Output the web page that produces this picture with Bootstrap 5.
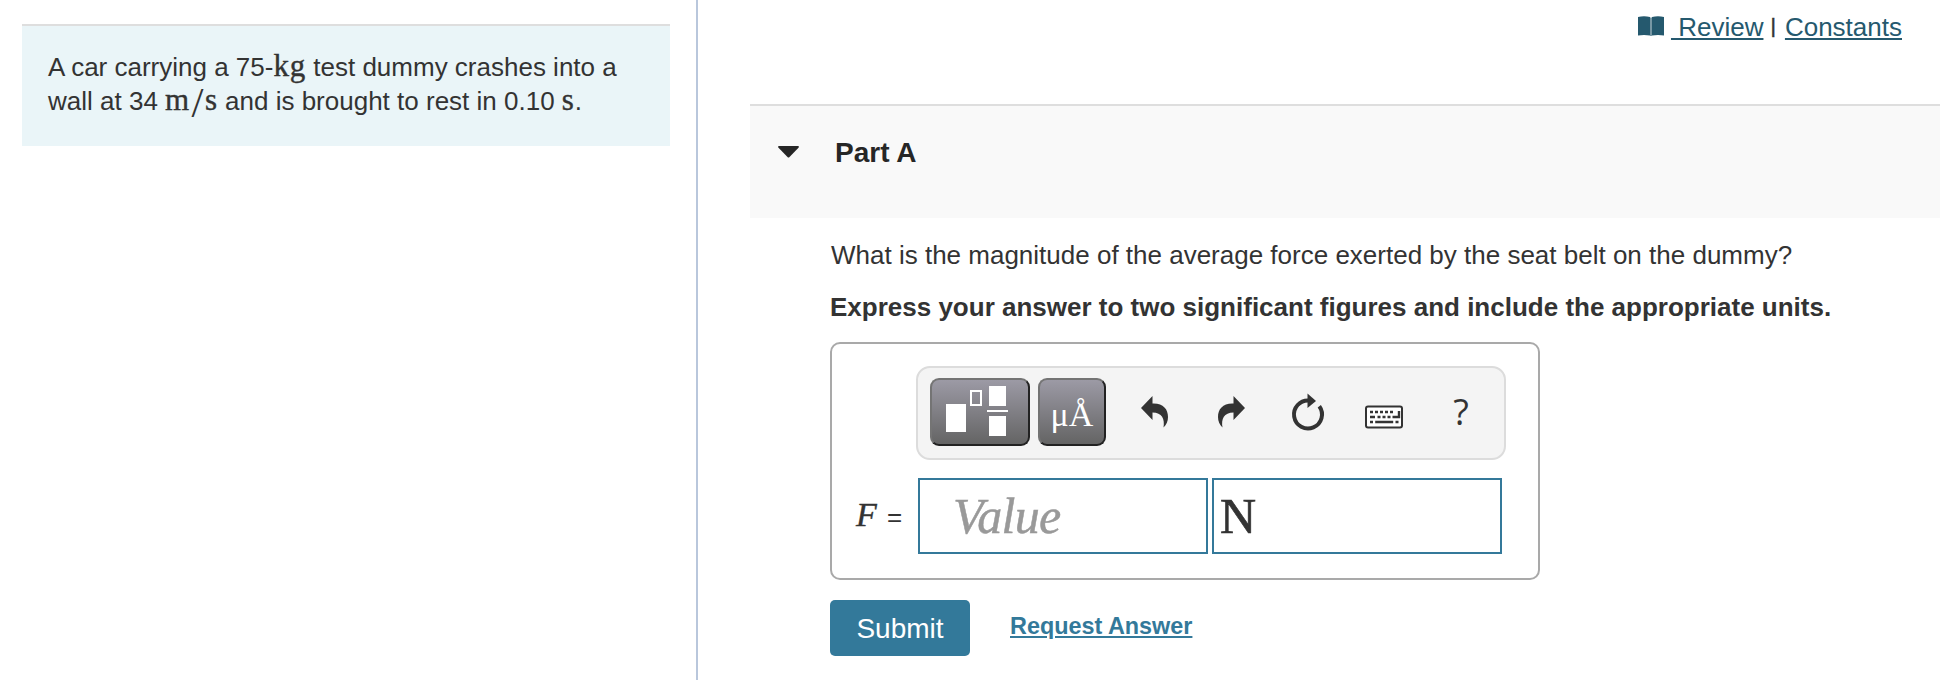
<!DOCTYPE html>
<html lang="en">
<head>
<meta charset="utf-8">
<meta name="viewport" content="width=device-width, initial-scale=1">
<title>Part A</title>
<link href="https://cdn.jsdelivr.net/npm/bootstrap@5.3.0/dist/css/bootstrap.min.css" rel="stylesheet">
<style>
  body { font-family: "Liberation Sans", Arial, sans-serif; font-size: 26px; line-height: 34px; color: #333; background: #fff; height: 680px; overflow: hidden; }
  .problem-pane { width: 698px; height: 680px; border-right: 2px solid #b9c7dc; padding: 24px 26px 0 22px; }
  .problem-text { height: 122px; background: #eaf5f8; border-top: 2px solid #dedede; padding: 24px 0 0 26px; white-space: nowrap; }
  .problem-text div { height: 34px; }
  .tex { font-family: "Liberation Serif", serif; line-height: 1px; -webkit-text-stroke: .4px #333; }
  .tex-unit { font-size: 31px; letter-spacing: .8px; }
  .tex-slash { font-family: "Liberation Serif", serif; font-size: 43px; line-height: 1px; position: relative; top: 7px; margin: 0 1.5px; }
  .work-pane { padding-left: 52px; padding-right: 16px; }
  .top-links { height: 104px; padding: 10px 38px 0 0; }
  .top-links a { color: #25596e; text-decoration-thickness: 2px; text-underline-offset: 2px; white-space: pre; }
  .link-divider { font-size: 21px; line-height: 32px; margin: 0 9px 0 7px; -webkit-text-stroke: .5px #333; }
  .book { margin: 6px 7px 0 0; }
  .part-head { height: 114px; background: #f9f9f9; border-top: 2px solid #dedede; padding: 30px 0 0 28px; font-size: 28px; font-weight: bold; color: #262626; }
  .part-head svg { margin: 10px 36px 0 0; }
  .part-body { padding-left: 80px; }
  .question { margin-top: 20px; padding-left: 1px; height: 34px; white-space: nowrap; }
  .instruction { margin-top: 18px; height: 34px; white-space: nowrap; font-weight: bold; }
  .answer-box { margin-top: 18px; width: 710px; height: 238px; border: 2px solid #a9a9a9; border-radius: 10px; padding-top: 22px; }
  .math-tools { margin-left: 84px; width: 590px; height: 94px; border: 2px solid #dcdcdc; border-radius: 14px; background: #f4f4f4; padding: 10px 12px; }
  .tool-key { height: 68px; border: 2px solid; border-color: #747474 #222 #222 #747474; border-radius: 9px; background: linear-gradient(#9c9aa5, #646464); color: #fff; padding: 0; }
  .units-key { width: 68px; margin-left: 8px; font-family: "Liberation Serif", serif; font-size: 34px; line-height: 58px; padding-top: 6px; }
  .tool-icons { margin-left: 20px; }
  .help-mark { font-family: "Open Sans", sans-serif; font-size: 36px; line-height: 67px; width: 40px; text-align: center; margin-right: 11px; }
  .entry { margin-top: 18px; height: 76px; }
  .entry-label { width: 86px; padding-left: 24px; line-height: 78px; white-space: nowrap; }
  .entry-symbol { font-size: 34px; margin-right: 3px; }
  .entry-field { width: 290px; height: 76px; border: 2px solid #34799a; font-family: "Liberation Serif", serif; font-size: 50px; line-height: 72px; }
  .entry-value { padding-left: 33px; font-style: italic; color: #999; letter-spacing: -.7px; -webkit-text-stroke: .5px #999; }
  .entry-unit { padding-left: 6px; margin-left: 4px; -webkit-text-stroke: .7px #333; }
  .submit-row { margin-top: 20px; }
  .btn-submit { width: 140px; height: 56px; background: #33799a; color: #fff; border: 0; border-radius: 5px; font-size: 28px; line-height: 57px; padding: 0; }
  .request { color: #33799a; font-weight: bold; font-size: 23.4px; margin-left: 40px; line-height: 52px; text-decoration-thickness: 2px; text-underline-offset: 2px; }
</style>
</head>
<body>
<div class="d-flex">
  <aside class="problem-pane flex-shrink-0">
    <div class="problem-text">
      <div>A car carrying a 75-<span class="tex tex-unit">kg</span> test dummy crashes into a</div>
      <div>wall at 34 <span class="tex tex-unit">m</span><span class="tex-slash">/</span><span class="tex tex-unit">s</span> and is brought to rest in 0.10 <span class="tex tex-unit">s</span>.</div>
    </div>
  </aside>
  <main class="work-pane flex-grow-1">
    <div class="top-links d-flex justify-content-end align-items-start">
      <svg class="book" width="26" height="20" viewBox="0 0 26 20"><path fill="#25596e" d="M0 1Q6-.5 12 1V19.500Q6 18.500 0 19.500ZM14 1Q20-.5 26 1V19.500Q20 18.500 14 19.500Z"/><path fill="#7797a4" d="M12 1.500h2V20h-2z"/></svg>
      <a href="#"> Review</a><span class="link-divider">|</span><a href="#">Constants</a>
    </div>
    <div class="part-head d-flex align-items-start">
      <svg width="21" height="12" viewBox="0 0 21 12"><path fill="#262626" d="M1 0h19q1.500.5.5 1.700L11.500 11q-1 1-2 0L.5 1.700Q-.5.500 1 0z"/></svg>
      <span>Part A</span>
    </div>
    <div class="part-body">
      <div class="question">What is the magnitude of the average force exerted by the seat belt on the dummy?</div>
      <div class="instruction">Express your answer to two significant figures and include the appropriate units.</div>
      <div class="answer-box">
        <div class="math-tools d-flex">
          <button class="tool-key" type="button" aria-label="Templates">
            <svg class="d-block" width="96" height="64" viewBox="932 380 96 64"><g fill="#fff"><path d="M946 404h20v28h-20zM989 386h17v20h-17zM987 410h21v2h-21zM989 416h17v20h-17z"/></g><path fill="none" stroke="#fff" stroke-width="2" d="M971 391h10v14h-10z"/></svg>
          </button>
          <button class="tool-key units-key" type="button">μÅ</button>
          <svg class="tool-icons" width="290" height="68" viewBox="1126 378 290 68" fill="#333">
            <path d="M1141 408L1152.500 396V403.500C1163 403 1168 409 1168 417C1168 421 1166.500 425 1163.500 427.500C1165 419 1162 412.500 1152.500 412.500V420Z"/>
            <path d="M1245 408L1233.500 396V403.500C1223 403 1218 409 1218 417C1218 421 1219.500 425 1222.500 427.500C1221 419 1224 412.500 1233.500 412.500V420Z"/>
            <path fill="none" stroke="#333" stroke-width="4" d="M1319.300 406.200A14 14 0 1 1 1309 400.500"/>
            <path d="M1307.500 393.500L1316 401L1307.500 408Z"/>
            <rect x="1366" y="406.500" width="36" height="21" rx="2" fill="#fff" stroke="#333" stroke-width="2"/>
            <path stroke="#333" stroke-width="2.400" fill="none" d="M1370 412h3m2 0h3m2 0h3m2 0h3m2 0h3M1370 417h5m2.500 0h3m2 0h3m2 0h3m2 0h6.500V411M1370 422h3m2.200 0h18m2.300 0h3"/>
          </svg>
          <span class="help-mark ms-auto">?</span>
        </div>
        <div class="entry d-flex">
          <div class="entry-label"><span class="tex fst-italic entry-symbol">F</span> =</div>
          <div class="entry-field entry-value">Value</div>
          <div class="entry-field entry-unit">N</div>
        </div>
      </div>
      <div class="submit-row d-flex align-items-start">
        <button class="btn btn-submit" type="button">Submit</button>
        <a class="request" href="#">Request Answer</a>
      </div>
    </div>
  </main>
</div>
<script src="https://cdn.jsdelivr.net/npm/bootstrap@5.3.0/dist/js/bootstrap.bundle.min.js"></script>
</body>
</html>
